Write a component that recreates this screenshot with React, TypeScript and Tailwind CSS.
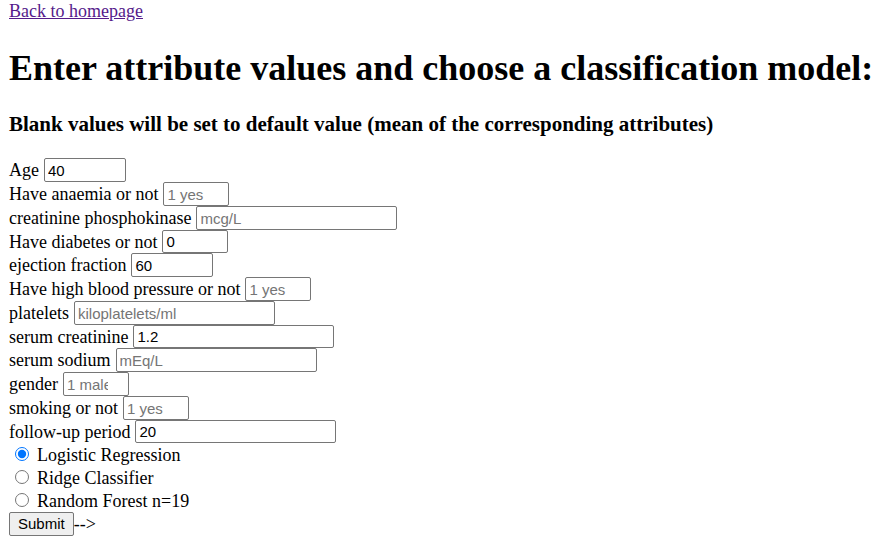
type FieldProps = { id: string; label: string; width: string; value?: string; placeholder?: string };

const fields: FieldProps[] = [
  { id: "age", label: "Age", width: "w-[82px]", value: "40" },
  { id: "anaemia", label: "Have anaemia or not", width: "w-[66px]", placeholder: "1 yes" },
  { id: "cpk", label: "creatinine phosphokinase", width: "w-[201px]", placeholder: "mcg/L" },
  { id: "diabetes", label: "Have diabetes or not", width: "w-[66px]", value: "0" },
  { id: "ejection", label: "ejection fraction", width: "w-[82px]", value: "60" },
  { id: "pressure", label: "Have high blood pressure or not", width: "w-[66px]", placeholder: "1 yes" },
  { id: "platelets", label: "platelets", width: "w-[201px]", placeholder: "kiloplatelets/ml" },
  { id: "serum-creatinine", label: "serum creatinine", width: "w-[201px]", value: "1.2" },
  { id: "sodium", label: "serum sodium", width: "w-[201px]", placeholder: "mEq/L" },
  { id: "gender", label: "gender", width: "w-[66px]", placeholder: "1 male" },
  { id: "smoking", label: "smoking or not", width: "w-[66px]", placeholder: "1 yes" },
  { id: "period", label: "follow-up period", width: "w-[201px]", value: "20" },
];

const models = ["Logistic Regression", "Ridge Classifier", "Random Forest n=19"];

function Field({ id, label, width, value, placeholder }: FieldProps) {
  return (
    <div className="flex h-6 items-center gap-[5px] nth-[4n]:h-[23px]">
      <label htmlFor={id}>{label}</label>
      <input
        id={id}
        type="number"
        step="any"
        defaultValue={value}
        placeholder={placeholder}
        className={`${width} h-full rounded-[2px] border border-[#767676] bg-white pr-[5px] pl-[3px] font-['Liberation_Sans',Arial,sans-serif] text-[15px] text-black placeholder:text-[#757575]`}
      />
    </div>
  );
}

export default function App() {
  return (
    <main className="bg-white px-[9px] font-['Liberation_Serif','Times_New_Roman',serif] text-lg leading-6 text-black">
      <nav className="leading-[22px]">
        <a href="#" className="text-[#551a8b] underline">Back to homepage</a>
      </nav>
      <h1 className="mt-[26px] text-4xl leading-10 font-bold">Enter attribute values and choose a classification model:</h1>
      <h3 className="mt-6 text-[21px] leading-6 font-bold">Blank values will be set to default value (mean of the corresponding attributes)</h3>
      <form className="mt-[22px]" onSubmit={(e) => e.preventDefault()}>
        <div>
          {fields.map((f) => (
            <Field key={f.id} {...f} />
          ))}
        </div>
        {models.map((m, i) => (
          <div key={m} className="flex h-[23px] items-center">
            <label className="flex items-center gap-2 pl-[6px]">
              <input type="radio" name="model" defaultChecked={i === 0} className="mb-[2px] size-[14px]" />
              {m}
            </label>
          </div>
        ))}
        <div className="flex items-center">
          <button type="submit" className="h-6 rounded-[2px] border border-[#767676] bg-[#efefef] px-2 font-['Liberation_Sans',Arial,sans-serif] text-[15px] leading-5">Submit</button>
          <span>--&gt;</span>
        </div>
      </form>
    </main>
  );
}
